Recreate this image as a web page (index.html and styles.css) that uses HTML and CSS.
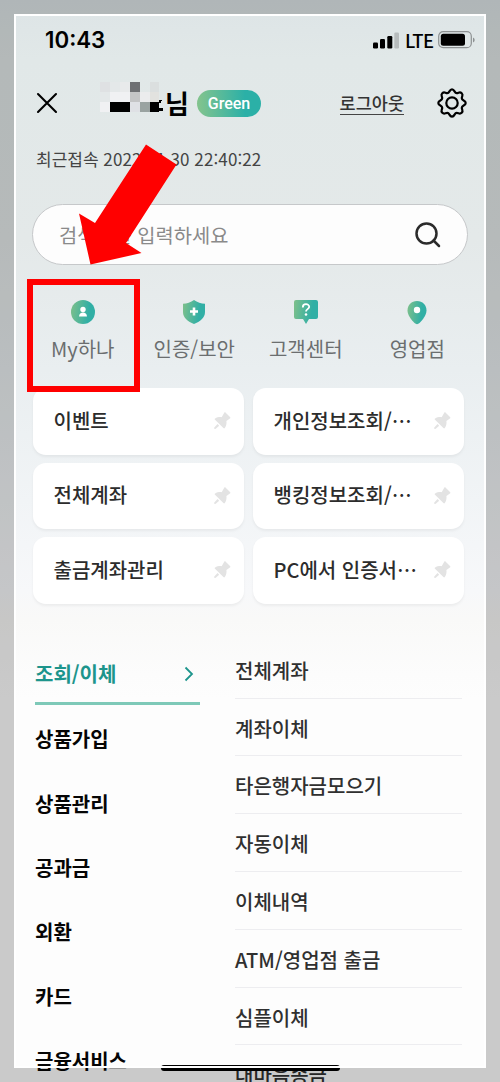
FILE: index.html
```html
<!DOCTYPE html>
<html lang="ko">
<head>
<meta charset="utf-8">
<title>전체메뉴</title>
<link rel="stylesheet" href="styles.css">
</head>
<body>
<div class="screen">
  <svg class="defs" width="0" height="0" aria-hidden="true">
    <defs>
      <linearGradient id="mint" x1="0" y1="0" x2="1" y2="0.15"><stop offset="0" stop-color="#7fc08a"/><stop offset="0.8" stop-color="#31afa5"/></linearGradient>
      <symbol id="pin" viewBox="0 0 18 18"><path d="M11.2.7c.5-.5 1-.5 1.500 0L17 5c.6.6.5 1.200-.1 1.600l-3.500 2.500c.4 2.400-.2 5-1.600 7-.4.5-.9.500-1.400 0L2 7.800c-.5-.5-.4-1 .1-1.300 1.900-1.100 4.400-1.600 6.600-1.300zM4.500 12l1.700 1.700-3.500 3c-.8.7-2-.400-1.400-1.300z" fill="#e3e3e3"/></symbol>
    </defs>
  </svg>

  <div class="status">
    <span class="time">10:43</span>
    <svg class="signal" width="27" height="17" viewBox="0 0 27 17"><rect x="0" y="10.500" width="5" height="6" rx="1.200"/><rect x="7" y="7" width="5" height="9.500" rx="1.200"/><rect x="14.300" y="4" width="5" height="12.500" rx="1.200"/><rect x="21.300" y="0.500" width="4.700" height="16" rx="1.200" fill="#b7bcbd"/></svg>
    <span class="net">LTE</span>
    <svg class="battery" width="37" height="18" viewBox="0 0 37 18"><rect x="0.700" y="0.700" width="32.600" height="16" rx="4.500" fill="none" stroke="#8d9192" stroke-width="1.200"/><rect x="2.800" y="2.700" width="24.200" height="12" rx="2.500"/><path d="M35 6.500v5q1.700-.8 1.700-2.500T35 6.500z" fill="#8d9192"/></svg>
  </div>

  <header class="header">
    <svg class="close" width="22" height="22" viewBox="0 0 22 22"><path d="M2 2l18 18M20 2L2 20" fill="none" stroke="#000" stroke-width="2.100" stroke-linecap="round"/></svg>
    <div class="name">
      <svg class="mosaic" width="64" height="30" viewBox="0 0 64 30" shape-rendering="crispEdges">
        <path fill="#dfe1e3" d="M0 0h10v10H0z"/><path fill="#e4e8e9" d="M10 0h10v10H10zM0 10h10v10H0z"/><path fill="#e8eaeb" d="M20 0h10v10H20z"/><path fill="#6e7073" d="M30 0h10v10H30z"/><path fill="#dbdfdf" d="M50 0h9v10h-9z"/>
        <path fill="#f0f1f3" d="M10 10h20v10H10zM0 20h10v10H0z"/><path fill="#c4c5c6" d="M30 10h10v10H30z"/><path fill="#ebeced" d="M40 10h10v10H40z"/><path fill="#e2e2df" d="M50 10h9v10h-9z"/>
        <path d="M10 20h20v10H10zM50 20h9v10h-9zM59 26h4v3h-4zM59 18l3 0-1 3h-2z"/><path fill="#dfe1e5" d="M30 20h10v10H30z"/><path fill="#9aa3a1" d="M40 20h10v10H40z"/>
      </svg>
      <span>님</span>
    </div>
    <span class="grade">Green</span>
    <a class="logout">로그아웃</a>
    <svg class="gear" width="32" height="32" viewBox="-16 -16 32 32"><path d="M0-13.700C2.800-13.700 2.300-9.800 4.700-9.800C6.700-9.800 7.700-11.700 9.700-9.700S9.700-6.700 9.800-4.700C9.800-2.300 13.700-2.800 13.700 0S9.800 2.300 9.800 4.700C9.700 6.700 11.700 7.700 9.700 9.700S6.700 9.800 4.700 9.800C2.300 9.800 2.800 13.700 0 13.700S-2.300 9.800-4.700 9.800C-6.700 9.800-7.700 11.700-9.700 9.700S-9.700 6.700-9.800 4.700C-9.800 2.300-13.700 2.800-13.700 0S-9.800-2.300-9.800-4.700C-9.700-6.700-11.700-7.700-9.700-9.700S-6.700-9.800-4.700-9.800C-2.300-9.800-2.800-13.700 0-13.700z" fill="none" stroke="#000" stroke-width="2.200"/><circle r="5.700" fill="none" stroke="#000" stroke-width="2.200"/></svg>
  </header>

  <p class="last">최근접속 <span>2022.11.30 22:40:22</span></p>

  <div class="search">
    <span>검색어를 입력하세요</span>
    <svg width="26" height="26" viewBox="0 0 26 26"><circle cx="11.500" cy="11.500" r="10" fill="none" stroke="#2b2b2b" stroke-width="2.500"/><path d="M18.500 18.500l5.500 5.500" stroke="#2b2b2b" stroke-width="2.500" stroke-linecap="round"/></svg>
  </div>

  <nav class="quick">
    <a><svg width="26" height="26" viewBox="0 0 26 26"><circle cx="13" cy="13" r="12" fill="url(#mint)"/><circle cx="13" cy="10.500" r="2.700" fill="#fff"/><path d="M9 17.500c0-5.200 8-5.200 8 0z" fill="#fff"/></svg><span>My하나</span></a>
    <a><svg width="26" height="26" viewBox="0 0 26 26"><path d="M13 1q5 3.500 11 3.700v8.300c0 6-5 9.500-11 12C7 22.500 2 19 2 13V4.700Q8 4.500 13 1z" fill="url(#mint)"/><path d="M13 8.500v8M9 12.500h8" stroke="#fff" stroke-width="2.600"/></svg><span>인증/보안</span></a>
    <a><svg width="26" height="26" viewBox="0 0 26 26"><path d="M3 1h20q2 0 2 2v15q0 2-2 2h-7l-3 5-3-5H3q-2 0-2-2V3q0-2 2-2z" fill="url(#mint)"/><path d="M9.800 8.500c0-4.500 6.400-4 6.400-.7 0 2.300-3.200 2.400-3.200 4.700" fill="none" stroke="#fff" stroke-width="1.800"/><circle cx="13" cy="15.500" r="1.300" fill="#fff"/></svg><span>고객센터</span></a>
    <a><svg width="26" height="26" viewBox="0 0 26 26"><path d="M13 2c5.500 0 9.500 4 9.500 9.500 0 4.500-4 9.500-7 12.500q-2.500 2.300-5 0c-3-3-7-8-7-12.500C3.500 6 7.500 2 13 2z" fill="url(#mint)"/><circle cx="13" cy="11" r="3.200" fill="#fff"/></svg><span>영업점</span></a>
  </nav>

  <section class="cards">
    <a class="card"><span>이벤트</span><svg class="pin"><use href="#pin"/></svg></a>
    <a class="card"><span>개인정보조회/⋯</span><svg class="pin"><use href="#pin"/></svg></a>
    <a class="card"><span>전체계좌</span><svg class="pin"><use href="#pin"/></svg></a>
    <a class="card"><span>뱅킹정보조회/⋯</span><svg class="pin"><use href="#pin"/></svg></a>
    <a class="card"><span>출금계좌관리</span><svg class="pin"><use href="#pin"/></svg></a>
    <a class="card"><span>PC에서 인증서⋯</span><svg class="pin"><use href="#pin"/></svg></a>
  </section>

  <section class="menu">
    <ul class="groups">
      <li class="active"><span>조회/이체</span><svg width="10" height="16" viewBox="0 0 10 16"><path d="M1.500 1.500L8 8l-6.500 6.500" fill="none" stroke="#1d958c" stroke-width="1.800"/></svg></li>
      <li>상품가입</li><li>상품관리</li><li>공과금</li><li>외환</li><li>카드</li><li>금융서비스</li>
    </ul>
    <ul class="items">
      <li>전체계좌</li><li>계좌이체</li><li>타은행자금모으기</li><li>자동이체</li><li>이체내역</li><li>ATM/영업점 출금</li><li>심플이체</li><li>대마음송금</li>
    </ul>
  </section>

  <div class="home"></div>
  <div class="frame"><div class="frame-line"></div></div>
  <div class="highlight"></div>
  <svg class="arrow" width="98" height="122" viewBox="0 0 98 122"><path d="M67 0.500L97.500 20.500 47 99 62.500 109 11.500 120.500 0 69.500 16 79z" fill="#f00"/></svg>
</div>
</body>
</html>
```
FILE: styles.css
```css
* { box-sizing: border-box; }
body { margin: 0; font-family: "Noto Sans CJK KR", sans-serif; }
ul, p { margin: 0; padding: 0; list-style: none; }
svg { display: block; flex: none; }
.defs { position: absolute; }

.screen {
  position: relative;
  width: 500px;
  height: 1082px;
  overflow: hidden;
  padding: 26px 0 0;
  background: linear-gradient(#dde4e6 0, #e1e8e8 60px, #e4e9e9 240px, #e9eef0 370px, #f1f4f6 500px, #f7f8fa 590px, #f9f9f8 620px, #fcfcfc 675px, #fdfdfd 700px);
}

.status { display: flex; align-items: center; height: 28px; padding: 0 25px 0 45px; }
.time { flex: 1; font: 600 22.300px/28px Inter, sans-serif; }
.signal { margin-right: 5px; }
.net { width: 33px; font: 500 18.500px/28px "Noto Sans CJK KR", sans-serif; letter-spacing: -0.600px; }

.header { display: flex; align-items: center; height: 40px; margin-top: 29px; padding: 0 32px 0 36px; }
.name { position: relative; width: 89px; margin-left: 42px; text-align: right; font-weight: 700; font-size: 26px; line-height: 38px; }
.mosaic { position: absolute; left: 0; top: -2px; }
.grade { width: 64px; height: 27px; margin-left: 8px; border-radius: 14px; background: linear-gradient(90deg, #84c48d, #2bb0a7 75%); color: #fff; font: 500 16px/27px Roboto, sans-serif; text-align: center; }
.logout { margin-left: auto; color: #333; font-size: 17.500px; font-weight: 500; line-height: 22px; border-bottom: 1px solid #444; }
.gear { margin-left: 32px; }

.last { margin: 22px 0 0 36px; color: #444; font-size: 17px; line-height: 28px; }
.last span { letter-spacing: 0.120px; }

.search { display: flex; align-items: center; justify-content: space-between; height: 61px; margin: 31px 32px 0; padding: 0 26px; border: 1px solid #c6c8ca; border-radius: 31px; background: #fdfdfd; color: #8a8a8a; font-size: 19.800px; }

.quick { display: grid; grid-template-columns: repeat(4, 111.500px); margin: 34px 0 0 27px; }
.quick a { display: flex; flex-direction: column; align-items: center; color: #6b6e6f; font-size: 20px; line-height: 30px; }
.quick span { margin-top: 9px; }

.cards { display: grid; grid-template-columns: 211px 211px; gap: 8px 9px; margin: 24px 0 0 33px; }
.card { display: flex; align-items: center; justify-content: space-between; height: 66.600px; padding: 0 13px 0 20.500px; border-radius: 13px; background: #fff; box-shadow: 0 2px 3px rgba(0, 0, 0, 0.050); color: #2c2c2c; font-size: 20px; font-weight: 500; white-space: nowrap; }
.card span { position: relative; top: -1px; }
.pin { width: 18px; height: 18px; }

.menu { display: flex; margin: 37px 0 0 35px; }
.groups { width: 165px; font-size: 20px; font-weight: 700; color: #050505; }
.groups li { height: 64.400px; line-height: 67px; }
.groups .active { display: flex; align-items: center; justify-content: space-between; padding: 5px 6px 0 0; border-bottom: 3px solid #7ec9b8; color: #1d958c; }
.items { width: 227px; margin-left: 35px; font-size: 20px; font-weight: 500; color: #303030; }
.items li { height: 57.800px; line-height: 59px; border-bottom: 1px solid #ededf0; }

.home { position: absolute; left: 161px; top: 1065px; width: 179px; height: 6px; border-radius: 3px; background: #000; }
.frame { position: absolute; inset: 0; border: 14px solid rgba(0, 0, 0, 0.200); }
.frame-line { height: 100%; border: 2px solid #fff; }
.highlight { position: absolute; left: 27px; top: 279px; width: 113px; height: 113px; border: 6px solid #f00; }
.arrow { position: absolute; left: 79px; top: 144px; }
```
